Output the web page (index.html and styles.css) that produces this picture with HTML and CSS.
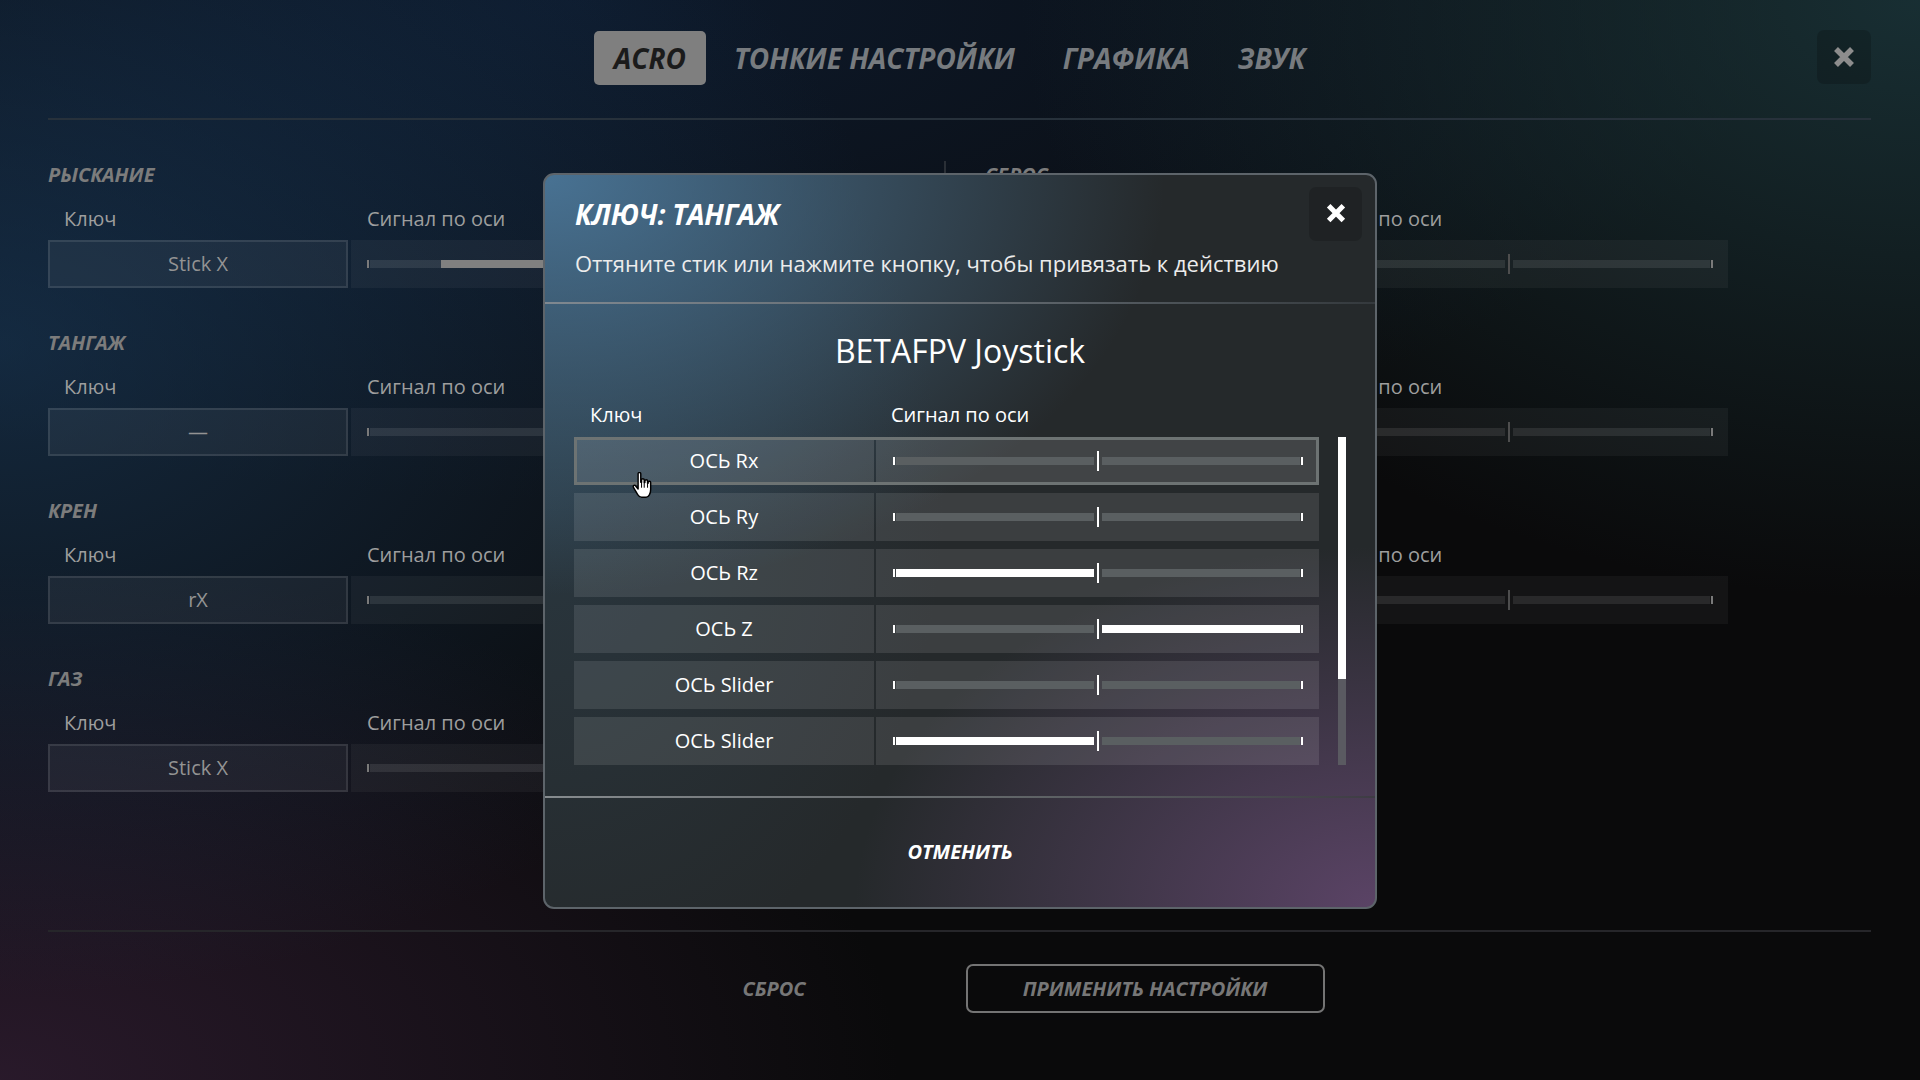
FILE: index.html
```html
<!DOCTYPE html>
<html lang="ru">
<head>
<meta charset="utf-8">
<title>Настройки управления</title>
<link rel="stylesheet" href="styles.css">
</head>
<body>
<div class="page">
  <header class="topbar">
    <div class="topbar-side"></div>
    <nav class="tabs">
      <span class="tab active">ACRO</span>
      <span class="tab">ТОНКИЕ НАСТРОЙКИ</span>
      <span class="tab">ГРАФИКА</span>
      <span class="tab">ЗВУК</span>
    </nav>
    <div class="topbar-side end">
      <button class="close-main" aria-label="Закрыть">
        <svg viewBox="0 0 24 24" width="24" height="24"><path d="M4 4 L20 20 M20 4 L4 20" stroke="currentColor" stroke-width="5.5" fill="none"/></svg>
      </button>
    </div>
  </header>

  <main class="bindings">
    <div class="col">
      <section class="bind">
        <h3 class="bind-title">РЫСКАНИЕ</h3>
        <div class="bind-grid labels"><span>Ключ</span><span>Сигнал по оси</span></div>
        <div class="bind-grid">
          <div class="keybox">Stick X</div>
          <div class="axisbox">
            <div class="track">
              <i class="tick"></i><i class="half left"><b class="fill" style="width:64%"></b></i><i class="ctick"></i><i class="half"></i><i class="tick"></i>
            </div>
          </div>
        </div>
      </section>
      <section class="bind">
        <h3 class="bind-title">ТАНГАЖ</h3>
        <div class="bind-grid labels"><span>Ключ</span><span>Сигнал по оси</span></div>
        <div class="bind-grid">
          <div class="keybox">—</div>
          <div class="axisbox">
            <div class="track">
              <i class="tick"></i><i class="half left"></i><i class="ctick"></i><i class="half"></i><i class="tick"></i>
            </div>
          </div>
        </div>
      </section>
      <section class="bind">
        <h3 class="bind-title">КРЕН</h3>
        <div class="bind-grid labels"><span>Ключ</span><span>Сигнал по оси</span></div>
        <div class="bind-grid">
          <div class="keybox">rX</div>
          <div class="axisbox">
            <div class="track">
              <i class="tick"></i><i class="half left"></i><i class="ctick"></i><i class="half"></i><i class="tick"></i>
            </div>
          </div>
        </div>
      </section>
      <section class="bind">
        <h3 class="bind-title">ГАЗ</h3>
        <div class="bind-grid labels"><span>Ключ</span><span>Сигнал по оси</span></div>
        <div class="bind-grid">
          <div class="keybox">Stick X</div>
          <div class="axisbox">
            <div class="track">
              <i class="tick"></i><i class="half left"></i><i class="ctick"></i><i class="half"></i><i class="tick"></i>
            </div>
          </div>
        </div>
      </section>
    </div>

    <div class="col secondary">
      <section class="bind">
        <h3 class="bind-title">СБРОС</h3>
        <div class="bind-grid labels"><span></span><span>Сигнал по оси</span></div>
        <div class="bind-grid">
          <div class="keybox"></div>
          <div class="axisbox">
            <div class="track">
              <i class="tick"></i><i class="half left"></i><i class="ctick"></i><i class="half"></i><i class="tick"></i>
            </div>
          </div>
        </div>
      </section>
      <section class="bind">
        <div class="bind-title"></div>
        <div class="bind-grid labels"><span></span><span>Сигнал по оси</span></div>
        <div class="bind-grid">
          <div class="keybox"></div>
          <div class="axisbox">
            <div class="track">
              <i class="tick"></i><i class="half left"></i><i class="ctick"></i><i class="half"></i><i class="tick"></i>
            </div>
          </div>
        </div>
      </section>
      <section class="bind">
        <div class="bind-title"></div>
        <div class="bind-grid labels"><span></span><span>Сигнал по оси</span></div>
        <div class="bind-grid">
          <div class="keybox"></div>
          <div class="axisbox">
            <div class="track">
              <i class="tick"></i><i class="half left"></i><i class="ctick"></i><i class="half"></i><i class="tick"></i>
            </div>
          </div>
        </div>
      </section>
    </div>
  </main>

  <footer class="actions">
    <button class="btn ghost">СБРОС</button>
    <button class="btn outline">ПРИМЕНИТЬ НАСТРОЙКИ</button>
  </footer>
</div>

<div class="overlay">
  <div class="modal">
    <div class="modal-head">
      <div class="modal-titlebar">
        <h2 class="modal-title">КЛЮЧ: ТАНГАЖ</h2>
        <button class="modal-close" aria-label="Закрыть">
          <svg viewBox="0 0 24 24" width="24" height="22"><path d="M4 3 L20 19 M20 3 L4 19" stroke="currentColor" stroke-width="5.5" fill="none"/></svg>
        </button>
      </div>
      <p class="modal-sub">Оттяните стик или нажмите кнопку, чтобы привязать к действию</p>
    </div>
    <div class="modal-body">
      <h1 class="device">BETAFPV Joystick</h1>
      <div class="row-grid tbl-head"><span>Ключ</span><span>Сигнал по оси</span></div>
      <div class="tbl">
        <div class="rows">
          <div class="row-grid axis-row selected">
            <div class="cell key">ОСЬ Rx</div>
            <div class="cell axis"><div class="mtrack"><i class="tick"></i><i class="half left"></i><i class="ctick"></i><i class="half"></i><i class="tick"></i></div></div>
          </div>
          <div class="row-grid axis-row">
            <div class="cell key">ОСЬ Ry</div>
            <div class="cell axis"><div class="mtrack"><i class="tick"></i><i class="half left"></i><i class="ctick"></i><i class="half"></i><i class="tick"></i></div></div>
          </div>
          <div class="row-grid axis-row">
            <div class="cell key">ОСЬ Rz</div>
            <div class="cell axis"><div class="mtrack"><i class="tick"></i><i class="half left"><b class="fill" style="width:100%"></b></i><i class="ctick"></i><i class="half"></i><i class="tick"></i></div></div>
          </div>
          <div class="row-grid axis-row">
            <div class="cell key">ОСЬ Z</div>
            <div class="cell axis"><div class="mtrack"><i class="tick"></i><i class="half left"></i><i class="ctick"></i><i class="half"><b class="fill" style="width:100%"></b></i><i class="tick"></i></div></div>
          </div>
          <div class="row-grid axis-row">
            <div class="cell key">ОСЬ Slider</div>
            <div class="cell axis"><div class="mtrack"><i class="tick"></i><i class="half left"></i><i class="ctick"></i><i class="half"></i><i class="tick"></i></div></div>
          </div>
          <div class="row-grid axis-row">
            <div class="cell key">ОСЬ Slider</div>
            <div class="cell axis"><div class="mtrack"><i class="tick"></i><i class="half left"><b class="fill" style="width:100%"></b></i><i class="ctick"></i><i class="half"></i><i class="tick"></i></div></div>
          </div>
        </div>
        <div class="scrollbar"><div class="thumb"></div></div>
      </div>
    </div>
    <div class="modal-foot">ОТМЕНИТЬ</div>
  </div>
</div>

<svg class="cursor" viewBox="0 0 18 24" width="20" height="27">
  <path d="M5.5 1.5 C5.5 0.7 6 0.3 6.7 0.3 C7.4 0.3 7.9 0.7 7.9 1.5 V9 H8.6 V7 C8.6 6.3 9.1 5.9 9.8 5.9 C10.5 5.9 11 6.3 11 7 V9.4 H11.6 V8 C11.6 7.3 12.1 6.9 12.8 6.9 C13.5 6.9 14 7.3 14 8 V10 H14.5 V9.2 C14.5 8.5 15 8.1 15.6 8.1 C16.3 8.1 16.8 8.5 16.8 9.2 V15.5 C16.8 19 15 22.6 12.8 22.6 H8.6 C6.9 22.6 6 21.6 5 20 L1.3 13.6 C0.9 12.9 1.1 12.2 1.7 11.9 C2.3 11.6 2.9 11.8 3.3 12.4 L5.5 15.2 Z" fill="#fff" stroke="#000" stroke-width="1.3" stroke-linejoin="round"/>
  <path d="M8.6 9 V14 M11 9.4 V14 M14 10 V14" stroke="#000" stroke-width="0.9"/>
</svg>
</body>
</html>
```

FILE: styles.css
```css
* { box-sizing: border-box; }

html, body {
  margin: 0;
  padding: 0;
  width: 1920px;
  height: 1080px;
  overflow: hidden;
}

body {
  font-family: "Open Sans", "Noto Sans", sans-serif;
  color: #9c9c9c;
  background:
    radial-gradient(ellipse 900px 650px at 0% 32%, rgba(28, 66, 104, 0.55), rgba(28, 66, 104, 0) 100%),
    radial-gradient(ellipse 900px 520px at 0% 100%, rgba(66, 38, 68, 0.55), rgba(66, 38, 68, 0) 100%),
    radial-gradient(ellipse 900px 600px at 100% 0%, rgba(30, 62, 68, 0.7), rgba(30, 62, 68, 0) 100%),
    radial-gradient(ellipse 1200px 500px at 30% 0%, rgba(14, 30, 52, 0.8), rgba(14, 30, 52, 0) 100%),
    #0a0a0b;
  position: relative;
}

button {
  font-family: inherit;
  border: none;
  background: none;
  padding: 0;
  cursor: pointer;
}

.page {
  height: 1080px;
  display: flex;
  flex-direction: column;
  padding: 0 49px 0 48px;
}

/* ---------- top bar ---------- */
.topbar {
  height: 120px;
  flex: none;
  display: grid;
  grid-template-columns: 1fr auto 1fr;
  align-items: center;
  border-bottom: 2px solid #27313b;
  padding-bottom: 2px;
}

.topbar-side.end {
  display: flex;
  justify-content: flex-end;
}

.tabs {
  display: flex;
  gap: 8px;
}

.tab {
  height: 54px;
  line-height: 54px;
  padding: 0 20px;
  font-size: 28px;
  font-weight: 700;
  font-style: italic;
  color: #777b7f;
  border-radius: 5px;
}

.tab.active {
  background: #7f7f7f;
  color: #1b1b1b;
}

.close-main {
  width: 54px;
  height: 54px;
  border-radius: 7px;
  background: rgba(0, 0, 0, 0.18);
  color: #8d8d8d;
  display: flex;
  align-items: center;
  justify-content: center;
  margin-top: -2px;
}

/* ---------- bindings ---------- */
.bindings {
  flex: 1;
  display: flex;
  align-items: flex-start;
  padding-top: 41px;
}

.col {
  width: 743px;
  flex: none;
}

.col.secondary {
  margin-left: 153px;
  border-left: 2px solid #2a2f36;
  padding-left: 39px;
  width: 784px;
}

.bind {
  margin-bottom: 41px;
}

.bind-title {
  margin: 0;
  height: 28px;
  line-height: 28px;
  font-size: 20px;
  font-weight: 700;
  font-style: italic;
  color: #7c7c7c;
}

.bind-grid {
  display: grid;
  grid-template-columns: 300px 440px;
  column-gap: 3px;
}

.bind-grid.labels {
  margin-top: 16px;
  margin-bottom: 8px;
  height: 27px;
  line-height: 27px;
  font-size: 20px;
  color: #9e9e9e;
}

.bind-grid.labels span {
  padding-left: 16px;
}

.keybox {
  height: 48px;
  line-height: 44px;
  text-align: center;
  font-size: 20px;
  color: #939393;
  background: rgba(255, 255, 255, 0.05);
  border: 2px solid rgba(255, 255, 255, 0.1);
}

.axisbox {
  height: 48px;
  background: rgba(255, 255, 255, 0.045);
  display: flex;
  align-items: center;
  padding: 0 15px 0 16px;
}

.track, .mtrack {
  flex: 1;
  display: flex;
  align-items: center;
  height: 20px;
}

.track i, .mtrack i { display: block; }

.track .tick {
  width: 2px;
  height: 8px;
  background: #7a7a7a;
  flex: none;
}

.track .half {
  flex: 1;
  height: 8px;
  background: rgba(255, 255, 255, 0.09);
  margin: 0 3px 0 1px;
  display: flex;
}

.track .ctick + .half { margin: 0 1px 0 3px; }

.track .half.left { justify-content: flex-end; }

.track .ctick {
  width: 2px;
  height: 20px;
  background: #4e4e4e;
  flex: none;
}

.track .fill {
  display: block;
  height: 100%;
  background: #808080;
}

/* ---------- footer ---------- */
.actions {
  flex: none;
  height: 150px;
  border-top: 2px solid #26262a;
  display: flex;
  justify-content: center;
  align-items: flex-start;
  gap: 12px;
  padding-top: 32px;
}

.btn {
  width: 359px;
  height: 49px;
  border-radius: 7px;
  font-size: 20px;
  font-weight: 700;
  font-style: italic;
  color: #777777;
  border: 2px solid transparent;
}

.btn.outline {
  border-color: #747474;
}

/* ---------- modal ---------- */
.overlay {
  position: absolute;
  inset: 0;
  display: flex;
  align-items: center;
  justify-content: center;
  padding-top: 2px;
}

.modal {
  width: 834px;
  height: 736px;
  border: 2px solid #5d646a;
  border-radius: 11px;
  overflow: hidden;
  display: flex;
  flex-direction: column;
  color: #fff;
  background:
    radial-gradient(ellipse 620px 420px at 0% 0%, rgba(78, 126, 164, 0.85), rgba(78, 126, 164, 0) 100%),
    radial-gradient(ellipse 520px 360px at 100% 100%, rgba(100, 72, 112, 0.85), rgba(100, 72, 112, 0) 100%),
    radial-gradient(ellipse 400px 500px at 0% 45%, rgba(50, 80, 100, 0.35), rgba(50, 80, 100, 0) 100%),
    #25292b;
}

.modal-head {
  padding: 12px 13px 26px 30px;
  position: relative;
}

.modal-head::after {
  content: "";
  position: absolute;
  left: 0;
  right: 0;
  bottom: 0;
  height: 2px;
  background: linear-gradient(90deg, #7f8890 0%, #5b6268 60%, #34393d 100%);
}

.modal-titlebar {
  display: flex;
  align-items: center;
  justify-content: space-between;
  height: 54px;
}

.modal-title {
  margin: 0;
  font-size: 28px;
  font-weight: 700;
  font-style: italic;
  letter-spacing: -0.2px;
  color: #fff;
}

.modal-close {
  width: 53px;
  height: 54px;
  border-radius: 7px;
  background: rgba(0, 0, 0, 0.16);
  color: #fff;
  display: flex;
  align-items: center;
  justify-content: center;
}

.modal-sub {
  margin: 7px 0 0;
  font-size: 22px;
  line-height: 30px;
  color: #ececec;
}

.modal-body {
  padding: 25px 29px 33px;
  position: relative;
}

.modal-body::after {
  content: "";
  position: absolute;
  left: 0;
  right: 0;
  bottom: 0;
  height: 2px;
  background: linear-gradient(90deg, #868b8e 0%, #5e6265 60%, #3e3c44 100%);
}

.device {
  margin: 0;
  height: 44px;
  line-height: 44px;
  text-align: center;
  font-size: 32px;
  font-weight: 400;
  color: #fff;
}

.row-grid {
  display: grid;
  grid-template-columns: 300px 443px;
  column-gap: 2px;
}

.tbl-head {
  margin-top: 28px;
  margin-bottom: 9px;
  height: 27px;
  line-height: 27px;
  font-size: 20px;
  color: #fff;
}

.tbl-head span:first-child { padding-left: 16px; }
.tbl-head span:last-child { padding-left: 15px; }

.tbl {
  display: flex;
  gap: 19px;
}

.rows {
  width: 745px;
  display: flex;
  flex-direction: column;
  gap: 8px;
}

.axis-row {
  height: 48px;
}

.cell {
  background: rgba(255, 255, 255, 0.1);
}

.cell.key {
  line-height: 48px;
  text-align: center;
  font-size: 20px;
  color: #fff;
}

.cell.axis {
  display: flex;
  align-items: center;
  padding: 0 16px 0 17px;
}

.axis-row.selected .cell {
  background: rgba(255, 255, 255, 0.13);
}

.axis-row.selected {
  outline: 3px solid #6d7373;
  outline-offset: -3px;
}

.mtrack .tick {
  width: 2px;
  height: 8px;
  background: #fff;
  flex: none;
}

.mtrack .half {
  flex: 1;
  height: 8px;
  background: #5a5f61;
  margin: 0 3px 0 1px;
  display: flex;
}

.mtrack .ctick + .half { margin: 0 1px 0 3px; }

.mtrack .half.left { justify-content: flex-end; }

.mtrack .ctick {
  width: 2px;
  height: 20px;
  background: #fff;
  flex: none;
}

.mtrack .fill {
  display: block;
  height: 100%;
  background: #fff;
}

.scrollbar {
  width: 8px;
  height: 328px;
  background: #5a5a61;
}

.thumb {
  height: 242px;
  background: #fff;
}

.modal-foot {
  flex: 1;
  display: flex;
  align-items: center;
  justify-content: center;
  font-size: 20px;
  font-weight: 700;
  font-style: italic;
  color: #fff;
  padding-bottom: 2px;
}

/* ---------- pointer cursor ---------- */
.cursor {
  position: absolute;
  left: 632px;
  top: 472px;
}
```
